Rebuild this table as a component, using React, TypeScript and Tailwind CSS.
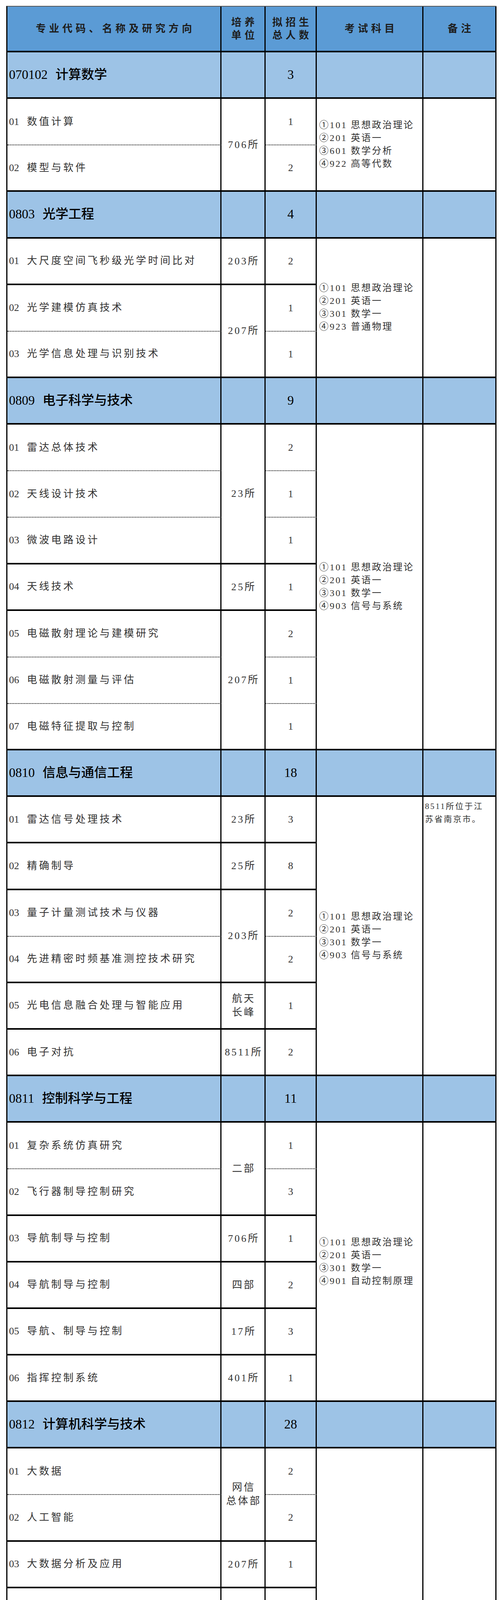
import React from "react";

type Unit = { label: string[]; span: number };
type Sub = { code: string; name: string[]; n: number; unit?: Unit };
type Section = {
  code: string;
  name: string;
  total: number;
  subs: Sub[];
  exam: string[];
  note?: string[];
};

const base3 = ["①101 思想政治理论", "②201 英语一", "③301 数学一"];

const sections: Section[] = [
  {
    code: "070102",
    name: "计算数学",
    total: 3,
    subs: [
      { code: "01", name: ["数值计算"], n: 1, unit: { label: ["706所"], span: 2 } },
      { code: "02", name: ["模型与软件"], n: 2 },
    ],
    exam: ["①101 思想政治理论", "②201 英语一", "③601 数学分析", "④922 高等代数"],
  },
  {
    code: "0803",
    name: "光学工程",
    total: 4,
    subs: [
      { code: "01", name: ["大尺度空间飞秒级光学时间比对"], n: 2, unit: { label: ["203所"], span: 1 } },
      { code: "02", name: ["光学建模仿真技术"], n: 1, unit: { label: ["207所"], span: 2 } },
      { code: "03", name: ["光学信息处理与识别技术"], n: 1 },
    ],
    exam: [...base3, "④923 普通物理"],
  },
  {
    code: "0809",
    name: "电子科学与技术",
    total: 9,
    subs: [
      { code: "01", name: ["雷达总体技术"], n: 2, unit: { label: ["23所"], span: 3 } },
      { code: "02", name: ["天线设计技术"], n: 1 },
      { code: "03", name: ["微波电路设计"], n: 1 },
      { code: "04", name: ["天线技术"], n: 1, unit: { label: ["25所"], span: 1 } },
      { code: "05", name: ["电磁散射理论与建模研究"], n: 2, unit: { label: ["207所"], span: 3 } },
      { code: "06", name: ["电磁散射测量与评估"], n: 1 },
      { code: "07", name: ["电磁特征提取与控制"], n: 1 },
    ],
    exam: [...base3, "④903 信号与系统"],
  },
  {
    code: "0810",
    name: "信息与通信工程",
    total: 18,
    subs: [
      { code: "01", name: ["雷达信号处理技术"], n: 3, unit: { label: ["23所"], span: 1 } },
      { code: "02", name: ["精确制导"], n: 8, unit: { label: ["25所"], span: 1 } },
      { code: "03", name: ["量子计量测试技术与仪器"], n: 2, unit: { label: ["203所"], span: 2 } },
      { code: "04", name: ["先进精密时频基准测控技术研究"], n: 2 },
      { code: "05", name: ["光电信息融合处理与智能应用"], n: 1, unit: { label: ["航天", "长峰"], span: 1 } },
      { code: "06", name: ["电子对抗"], n: 2, unit: { label: ["8511所"], span: 1 } },
    ],
    exam: [...base3, "④903 信号与系统"],
    note: ["8511所位于江", "苏省南京市。"],
  },
  {
    code: "0811",
    name: "控制科学与工程",
    total: 11,
    subs: [
      { code: "01", name: ["复杂系统仿真研究"], n: 1, unit: { label: ["二部"], span: 2 } },
      { code: "02", name: ["飞行器制导控制研究"], n: 3 },
      { code: "03", name: ["导航制导与控制"], n: 1, unit: { label: ["706所"], span: 1 } },
      { code: "04", name: ["导航制导与控制"], n: 2, unit: { label: ["四部"], span: 1 } },
      { code: "05", name: ["导航、制导与控制"], n: 3, unit: { label: ["17所"], span: 1 } },
      { code: "06", name: ["指挥控制系统"], n: 1, unit: { label: ["401所"], span: 1 } },
    ],
    exam: [...base3, "④901 自动控制原理"],
  },
  {
    code: "0812",
    name: "计算机科学与技术",
    total: 28,
    subs: [
      { code: "01", name: ["大数据"], n: 2, unit: { label: ["网信", "总体部"], span: 2 } },
      { code: "02", name: ["人工智能"], n: 2 },
      { code: "03", name: ["大数据分析及应用"], n: 1, unit: { label: ["207所"], span: 1 } },
      { code: "04", name: ["分布式计算技术"], n: 2, unit: { label: ["706所"], span: 13 } },
      { code: "05", name: ["嵌入式计算机技术"], n: 2 },
      { code: "06", name: ["计算机网络技术"], n: 1 },
      { code: "07", name: ["数据存储技术"], n: 1 },
      { code: "08", name: ["嵌入式操作系统技术"], n: 2 },
      { code: "09", name: ["软件开发支持技术"], n: 1 },
      { code: "10", name: ["数据库管理技术"], n: 1 },
      { code: "11", name: ["云计算平台技术"], n: 1 },
      { code: "12", name: ["智能计算平台技术"], n: 1 },
      { code: "13", name: ["密码信息安全技术"], n: 1 },
      { code: "14", name: ["网络信息安全技术"], n: 1 },
      { code: "15", name: ["物联网技术"], n: 1 },
      { code: "16", name: ["大数据分析与应用技术"], n: 1 },
      { code: "17", name: ["人工智能与数据挖掘、智能视频分", "析"], n: 3, unit: { label: ["航天", "长峰"], span: 2 } },
      { code: "18", name: ["嵌入式计算机系统工程研究"], n: 2 },
      { code: "19", name: ["大数据分析与应用技术、网络与信", "息安全技术"], n: 1, unit: { label: ["四部"], span: 1 } },
      { code: "20", name: ["指挥通信"], n: 1, unit: { label: ["401所"], span: 1 } },
    ],
    exam: [...base3, "④909 计算机专业基", "础综合"],
  },
  {
    code: "0825",
    name: "航空宇航科学与技术",
    total: 7,
    subs: [
      { code: "01", name: ["飞行器总体设计研究"], n: 4, unit: { label: ["二部"], span: 1 } },
      { code: "02", name: ["飞行器总体设计"], n: 1, unit: { label: ["空间", "总体部"], span: 1 } },
      { code: "03", name: ["飞行器总体设计"], n: 2, unit: { label: ["四部"], span: 1 } },
    ],
    exam: [...base3, "④905 理论力学"],
  },
  {
    code: "0826",
    name: "兵器科学与技术",
    total: 6,
    subs: [
      { code: "01", name: ["发射理论与技术"], n: 2, unit: { label: ["206所"], span: 3 } },
      { code: "02", name: ["武器系统设计"], n: 2 },
      { code: "03", name: ["信息感知与控制技术"], n: 2 },
    ],
    exam: [...base3, "④901 自动控制原理", "或905 理论力学"],
    note: ["方向01 要求905", "必选，方向02、", "03要求901 必选", "。"],
  },
  {
    code: "0835",
    name: "软件工程",
    total: 4,
    subs: [
      { code: "01", name: ["军用软件工程技术"], n: 2, unit: { label: ["706所"], span: 3 } },
      { code: "02", name: ["软件可靠性与软件测试"], n: 1 },
      { code: "03", name: ["计算机网络与安全技术"], n: 1 },
    ],
    exam: [...base3, "④909 计算机专业基", "础综合"],
  },
];

const cell = "border-r-[3px] border-black p-0";

function SectionRows({ s }: { s: Section }) {
  const lastInGroup: boolean[] = [];
  let remaining = 0;
  s.subs.forEach((sub, i) => {
    if (sub.unit) remaining = sub.unit.span;
    remaining -= 1;
    lastInGroup[i] = remaining === 0;
  });
  const n = s.subs.length;
  return (
    <>
      <tr className="h-[119.15px] bg-[#9dc3e6]">
        <td className={`${cell} border-b-4 pl-[4px] text-[33px] font-medium text-black whitespace-nowrap`}>
          <span>{s.code}</span>
          <span className="ml-[20px]">{s.name}</span>
        </td>
        <td className={`${cell} border-b-4`} />
        <td className={`${cell} border-b-4 text-center text-[33px] font-medium text-black`}>{s.total}</td>
        <td className={`${cell} border-b-4`} />
        <td className={`${cell} border-b-4`} />
      </tr>
      {s.subs.map((sub, i) => {
        const bottom = lastInGroup[i] ? "border-b-4" : "border-b-2 [border-bottom-style:dotted]";
        return (
          <tr key={i} className="h-[119.15px]">
            <td className={`${cell} ${bottom} pl-[4px] text-[26px] leading-[34px] text-[#333333] whitespace-nowrap`}>
              {sub.name.map((line, k) => (
                <div key={k}>
                  {k === 0 && <span className="mr-[20px]">{sub.code}</span>}
                  <span className="tracking-[5px]">{line}</span>
                </div>
              ))}
            </td>
            {sub.unit && (
              <td
                rowSpan={sub.unit.span}
                className={`${cell} border-b-4 text-center text-[26px] leading-[35px] tracking-[4px] pl-[4px] text-[#333333] whitespace-nowrap`}
              >
                {sub.unit.label.map((l, k) => (
                  <div key={k}>{l}</div>
                ))}
              </td>
            )}
            <td className={`${cell} ${bottom} text-center text-[26px] text-[#333333]`}>{sub.n}</td>
            {i === 0 && (
              <>
                <td
                  rowSpan={n}
                  className={`${cell} border-b-4 pl-[6px] text-[24px] leading-[33px] tracking-[3px] text-[#333333] whitespace-nowrap`}
                >
                  {s.exam.map((l, k) => (
                    <div key={k}>{l}</div>
                  ))}
                </td>
                <td
                  rowSpan={n}
                  className={`${cell} border-b-4 align-top pt-[8px] pl-[4px] text-[21px] leading-[33px] tracking-[3px] text-[#333333] whitespace-nowrap`}
                >
                  {(s.note ?? []).map((l, k) => (
                    <div key={k}>{l}</div>
                  ))}
                </td>
              </>
            )}
          </tr>
        );
      })}
    </>
  );
}

export default function App() {
  return (
    <div className="min-h-[7533px] bg-white pt-[15px] pl-[16px] font-['Liberation_Serif','Noto_Sans_CJK_SC',serif]">
      <table className="w-[1255px] table-fixed border-separate border-spacing-0 border-l-[3px] border-t-2 border-black border-t-[#555555]">
        <colgroup>
          <col className="w-[548px]" />
          <col className="w-[113px]" />
          <col className="w-[131px]" />
          <col className="w-[273px]" />
          <col className="w-[187px]" />
        </colgroup>
        <tbody>
          <tr className="h-[117px] bg-[#5b9bd5] text-[26px] font-semibold text-[#1e1e1e]">
            <td className={`${cell} border-b-4 text-center tracking-[8px] pl-[8px]`}>专业代码、名称及研究方向</td>
            <td className={`${cell} border-b-4 text-center leading-[33px] tracking-[8px] pl-[8px]`}>
              <div>培养</div>
              <div>单位</div>
            </td>
            <td className={`${cell} border-b-4 text-center leading-[33px] tracking-[8px] pl-[8px]`}>
              <div>拟招生</div>
              <div>总人数</div>
            </td>
            <td className={`${cell} border-b-4 text-center tracking-[8px] pl-[8px]`}>考试科目</td>
            <td className={`${cell} border-b-4 text-center tracking-[8px] pl-[8px]`}>备注</td>
          </tr>
          {sections.map((s) => (
            <SectionRows key={s.code} s={s} />
          ))}
        </tbody>
      </table>
    </div>
  );
}
